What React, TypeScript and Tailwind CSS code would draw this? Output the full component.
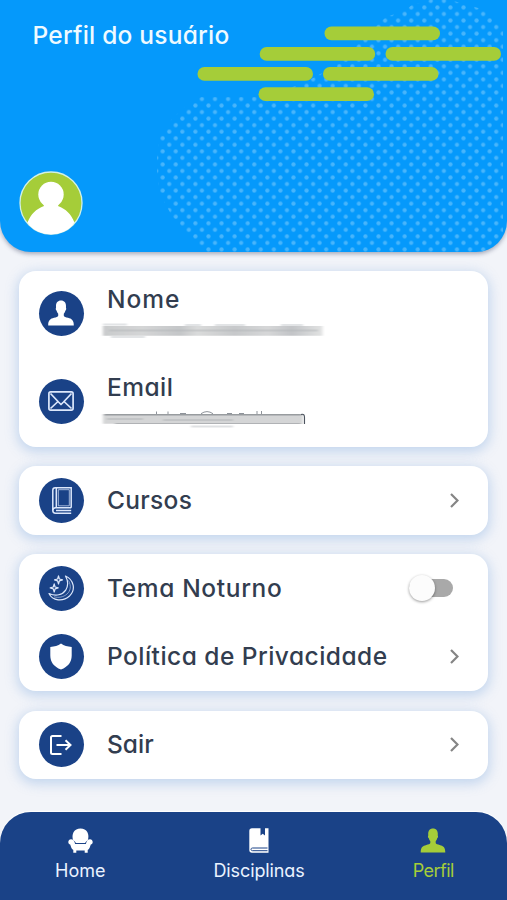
import type { ReactNode } from "react"
import { clsx } from "clsx"

function HeaderArt() {
  return (
    <svg className="absolute inset-0 h-full w-full" viewBox="0 0 507 252" preserveAspectRatio="none">
      <defs>
        <pattern id="dots" x="211.73" y="95.73" width="13.08" height="13.08" patternUnits="userSpaceOnUse">
          <circle cx="3.27" cy="3.27" r="2.1" fill="#48b5fb" />
          <circle cx="9.81" cy="9.81" r="2.1" fill="#48b5fb" />
        </pattern>
      </defs>
      <path
        d="M430 0H450L468 5L488 11L503 26V252H205L188 234L172 216L160 194L157 174V157L160 136L172 119L190 102L201 97H262L302 84L335 66L357 45L364 38L378 24L386 17L404 11L412 5Z"
        fill="url(#dots)"
      />
      <g fill="#a5cd39">
        <rect x="324.5" y="26.5" width="115.5" height="13.8" rx="6.9" />
        <rect x="259.7" y="47" width="115.5" height="13.8" rx="6.9" />
        <rect x="385.5" y="47" width="115.5" height="13.8" rx="6.9" />
        <rect x="197.5" y="67" width="115.5" height="13.8" rx="6.9" />
        <rect x="323" y="67" width="115.5" height="13.8" rx="6.9" />
        <rect x="258.5" y="87.3" width="115.5" height="13.8" rx="6.9" />
      </g>
    </svg>
  )
}

function Avatar() {
  return (
    <svg className="relative size-16" viewBox="0 0 64 64">
      <defs>
        <clipPath id="avatar">
          <circle cx="32" cy="32" r="31.5" />
        </clipPath>
      </defs>
      <circle cx="32" cy="32" r="31" fill="#a5cd39" stroke="#d3f1e4" strokeWidth="1.3" />
      <g clipPath="url(#avatar)" fill="#fff">
        <circle cx="32" cy="23.5" r="12.7" />
        <path d="M24 32h16l-1 3c8 3 13 8 16.500 16.500C50 60 41 64 32 64S14 60 8.500 51.500C12 43 17 38 25 35Z" />
      </g>
    </svg>
  )
}

function PersonIcon({ className }: { className?: string }) {
  return (
    <svg className={className} viewBox="0 0 26 26" fill="currentColor">
      <path d="M13 .5c3.300 0 5 2.300 5 5.500 0 .8-.1 1.400 0 2 .5.700.2 2-.5 2.400-.3 1.400-.9 2.500-1.700 3.300v2c.3 1 2 1.500 4.200 2.100 3.600 1 5.800 2.300 5.800 7.700H.2c0-5.400 2.200-6.700 5.800-7.700 2.200-.6 3.900-1.100 4.200-2.100v-2c-.8-.8-1.400-1.900-1.700-3.300-.7-.4-1-1.700-.5-2.400.1-.6 0-1.200 0-2 0-3.200 1.700-5.500 5-5.500Z" />
    </svg>
  )
}

function MailIcon() {
  return (
    <svg className="h-5 w-[26px]" viewBox="0 0 26 20" fill="none" stroke="#dce7fb" strokeWidth="1.7" strokeLinejoin="round">
      <rect x=".9" y=".9" width="24.2" height="18.200" rx="1.8" />
      <path d="M2.500 2.500 10.500 11 13 13.500 15.500 11 23.500 2.500M2.500 17.500l7.500-7M23.500 17.500l-7.500-7" />
    </svg>
  )
}

function BookIcon() {
  return (
    <svg className="ml-px h-[27px] w-5" viewBox="0 0 20 27" fill="none" stroke="#dce7fb" strokeWidth="1.5">
      <path d="M19.200 20.800V.8H3.200C1.700.8.8 1.800.8 3.300v20.200c0 1.700 1 2.700 2.700 2.700h15.700" />
      <path d="M19.200 20.700H3.500C1.700 20.700.8 22 .8 23.500M19.200 23.500H4" />
      <path d="M4.300 1V20.500" />
      <path d="M6.300 2.700H17.300V18.800H6.300Z" strokeWidth="1" opacity=".7" />
    </svg>
  )
}

function MoonIcon() {
  return (
    <svg className="size-[26px]" viewBox="0 0 26 26" fill="none" stroke="#dce7fb" strokeWidth="1.2" strokeLinejoin="round">
      <path d="M17.500 1C26 5 28 14.500 21.500 21 15 27 4.500 26 1 18.500c7 3 13.500 1.500 16.700-3.300C20.300 11 20 5.500 17.500 1Z" />
      <path d="M20.500 5.500c3 5.500 2 10.500-1.500 13.500-3.500 3.200-8.500 4-13 2.800" strokeWidth=".8" opacity=".7" />
      <path d="M10.500.8 11.400 4l3.100.9-3.100.9-.9 3.200-.9-3.200-3.100-.9L9.600 4ZM6.200 8.800l.9 3.200 3.100.9-3.100.9-.9 3.200-.9-3.200-3.100-.9 3.100-.9Z" />
    </svg>
  )
}

function ShieldIcon() {
  return (
    <svg className="h-[27px] w-[22px]" viewBox="0 0 22 27" fill="#fff">
      <path d="M11 .5C14 2.600 17.500 3.700 21.700 4v8.500c0 6.500-3.500 11.300-10.700 14C3.800 23.800.3 19 .3 12.500V4C4.500 3.700 8 2.600 11 .5Z" />
    </svg>
  )
}

function ExitIcon() {
  return (
    <svg className="h-5 w-[22px]" viewBox="0 0 22 20" fill="none" stroke="#fff" strokeWidth="2">
      <path d="M11.500 1H2.500C1.500 1 1 1.500 1 2.500v15c0 1 .5 1.500 1.500 1.500h9M6.500 10H20.500M15.500 5.200 20.500 10l-5 4.800" />
    </svg>
  )
}

function ArmchairIcon() {
  return (
    <svg className="h-[25px] w-[25px]" viewBox="0 0 25 25" fill="#fff">
      <path d="M5.300 12.500C3 6 6.200.4 12.500.4S22 6 19.700 12.500c-1.500.7-2.200 1.600-2.500 2.500H7.800c-.3-.9-1-1.800-2.500-2.500Z" />
      <path d="M3 11.200c2.300 0 3.500 1.600 4.100 4.900h10.800c.6-3.300 1.800-4.900 4.100-4.900 1.500 0 2.700 1.200 2.700 2.700 0 1.300-.8 2.200-1.900 2.600-1 2.500-1 4.300-3.100 5.500v2.800h-3V22.500H8.300v2.300h-3V22C3.200 20.800 3.200 19 2.200 16.500 1.100 16.100.3 15.200.3 13.900c0-1.500 1.200-2.700 2.700-2.700Z" />
    </svg>
  )
}

function BookmarkIcon() {
  return (
    <svg className="h-[25px] w-5" viewBox="0 0 20 25" fill="#fff">
      <path d="M3 .3h8.500V7.500L13.700 5.800 16 7.500V.3h3.500V24.700H3C1.300 24.700.3 23.700.3 22V3C.3 1.300 1.300.3 3 .3Z" />
      <path d="M18.500 20H3.500c-2 0-2 2.700 0 2.700h15" fill="none" stroke="#1a4287" strokeWidth="1" />
    </svg>
  )
}

function Chevron() {
  return (
    <svg className="mr-[29px] h-[15px] w-[9px]" viewBox="0 0 9 15" fill="none" stroke="#858585" strokeWidth="2.2">
      <path d="M1 1 7.500 7.500 1 14" />
    </svg>
  )
}

function HiddenName() {
  return (
    <svg className="-ml-1 block h-[18px] w-[221px] overflow-visible" viewBox="0 0 221 18">
      <defs>
        <linearGradient id="name">
          <stop offset="0" stopColor="#c9cbcc" />
          <stop offset=".18" stopColor="#d4d5d6" />
          <stop offset=".35" stopColor="#c4c6c8" />
          <stop offset=".43" stopColor="#dadbdb" />
          <stop offset=".6" stopColor="#c6c8ca" />
          <stop offset=".75" stopColor="#d6d7d8" />
          <stop offset=".86" stopColor="#c2c4c7" />
          <stop offset="1" stopColor="#e2e3e3" />
        </linearGradient>
        <filter id="smudge" x="-5%" y="-40%" width="110%" height="180%">
          <feGaussianBlur stdDeviation="1.5 .7" />
        </filter>
      </defs>
      <g filter="url(#smudge)">
        <path d="M0 4H219.500V13.800H0Z" fill="url(#name)" />
        <path d="M0 2.500H24M82 3H98M112 3H142M178 3H200M8 15H42" stroke="#e2e4e6" strokeWidth="1.800" />
        <path d="M6 8.500H215" stroke="#b2b5b8" strokeWidth="1.800" opacity=".45" />
      </g>
    </svg>
  )
}

function HiddenEmail() {
  return (
    <svg className="-ml-1 block h-[18px] w-[210px] overflow-visible" viewBox="0 0 210 18">
      <path
        d="M53.500 1.500V4M65 1.500V4M77 3.500h6M98 3.700Q104-.5 110 3.700M124 3.500h5M136 3.500h5M154 1V4M158.500 1V4"
        fill="none"
        stroke="#8f949b"
        strokeWidth="1"
      />
      <g filter="url(#smudge)">
        <path d="M0 4.200H200V13.800H0Z" fill="#d4d5d6" />
        <path d="M1 4.700H199" stroke="#989c9f" strokeWidth="1.400" />
        <path d="M4 9H40M60 10H130" stroke="#c2c4c6" strokeWidth="1.800" />
        <path d="M12 13.500H198" stroke="#b0b2b5" strokeWidth="1.200" />
        <path d="M88 16.500H130" stroke="#dfe1e3" strokeWidth="1.800" />
      </g>
      <path d="M198 4.500c3-.8 3.500 1 3.500 3V14" fill="none" stroke="#4c535e" strokeWidth="1.100" />
    </svg>
  )
}

function Card({ children }: { children: ReactNode }) {
  return (
    <section className="rounded-[17px] bg-white shadow-[0_3px_12px_2px_rgba(120,165,220,0.38)]">{children}</section>
  )
}

interface RowProps {
  icon: ReactNode
  label: string
  labelClass: string
  action?: ReactNode
}

function Badge({ children }: { children: ReactNode }) {
  return (
    <span className="flex size-[45px] shrink-0 items-center justify-center rounded-full bg-[#1a4287] text-white">
      {children}
    </span>
  )
}

function Row({ icon, label, labelClass, action = <Chevron /> }: RowProps) {
  return (
    <div className="flex h-[68.5px] items-center pl-[19.5px]">
      <Badge>{icon}</Badge>
      <span
        className={clsx(
          "ml-[23.5px] flex-1 whitespace-nowrap text-[24.5px] font-medium text-[#323d4f]",
          labelClass,
        )}
      >
        {label}
      </span>
      {action}
    </div>
  )
}

function Field({ icon, label, labelClass, children }: RowProps & { children: ReactNode }) {
  return (
    <div className="flex h-[88px] pl-[19.5px] pt-5">
      <Badge>{icon}</Badge>
      <div className="-mt-2 ml-[23.5px]">
        <div className={clsx("h-[39px] text-[24.5px] leading-8 font-medium text-[#323d4f]", labelClass)}>{label}</div>
        {children}
      </div>
    </div>
  )
}

function Toggle() {
  return (
    <span className="mr-[35px] flex h-[18px] w-11 items-center rounded-full bg-[#a9a9a9]">
      <span className="size-[26px] shrink-0 rounded-full bg-[#fcfcfc] shadow-[0_1px_3px_rgba(0,0,0,0.4)]" />
    </span>
  )
}

export default function App() {
  return (
    <div className="flex h-[900px] w-[507px] flex-col overflow-hidden bg-[#f2f4f9] font-['Inter','Liberation_Sans',sans-serif] [font-feature-settings:'cv11']">
      <header className="relative flex h-[252px] shrink-0 flex-col justify-between overflow-hidden rounded-b-[31px] bg-[#0599fb] pt-5 pb-[17px] pl-[19px] shadow-[0_2px_4px_rgba(70,80,110,0.45)]">
        <HeaderArt />
        <h1 className="relative ml-[13.5px] text-[24.5px] leading-[30px] font-medium tracking-[0.23px] text-[#effaff]">
          Perfil do usuário
        </h1>
        <Avatar />
      </header>

      <main className="flex flex-1 flex-col gap-[19.5px] px-[19px] pt-[18.5px]">
        <Card>
          <Field icon={<PersonIcon className="size-[26px]" />} label="Nome" labelClass="tracking-[1px]">
            <HiddenName />
          </Field>
          <Field icon={<MailIcon />} label="Email" labelClass="tracking-[0.45px]">
            <HiddenEmail />
          </Field>
        </Card>
        <Card>
          <Row icon={<BookIcon />} label="Cursos" labelClass="tracking-[0.3px]" />
        </Card>
        <Card>
          <Row icon={<MoonIcon />} label="Tema Noturno" labelClass="tracking-[0.65px]" action={<Toggle />} />
          <Row icon={<ShieldIcon />} label="Política de Privacidade" labelClass="tracking-[0.47px]" />
        </Card>
        <Card>
          <Row icon={<ExitIcon />} label="Sair" labelClass="tracking-[0px]" />
        </Card>
      </main>

      <nav className="flex h-[88px] shrink-0 justify-between rounded-t-[31px] bg-[#1a4287] pr-[53px] pl-[55px] pt-4 text-lg leading-6 text-[#eaf3ff] shadow-[0_-1px_1px_#fff]">
        <a className="flex flex-col items-center gap-1.5">
          <ArmchairIcon />
          <span>Home</span>
        </a>
        <a className="flex flex-col items-center gap-1.5">
          <BookmarkIcon />
          <span className="tracking-[-0.12px]">Disciplinas</span>
        </a>
        <a className="flex flex-col items-center gap-1.5 text-[#a5cd39]">
          <PersonIcon className="h-[25px] w-[26px]" />
          <span className="tracking-[-0.5px]">Perfil</span>
        </a>
      </nav>
    </div>
  )
}
